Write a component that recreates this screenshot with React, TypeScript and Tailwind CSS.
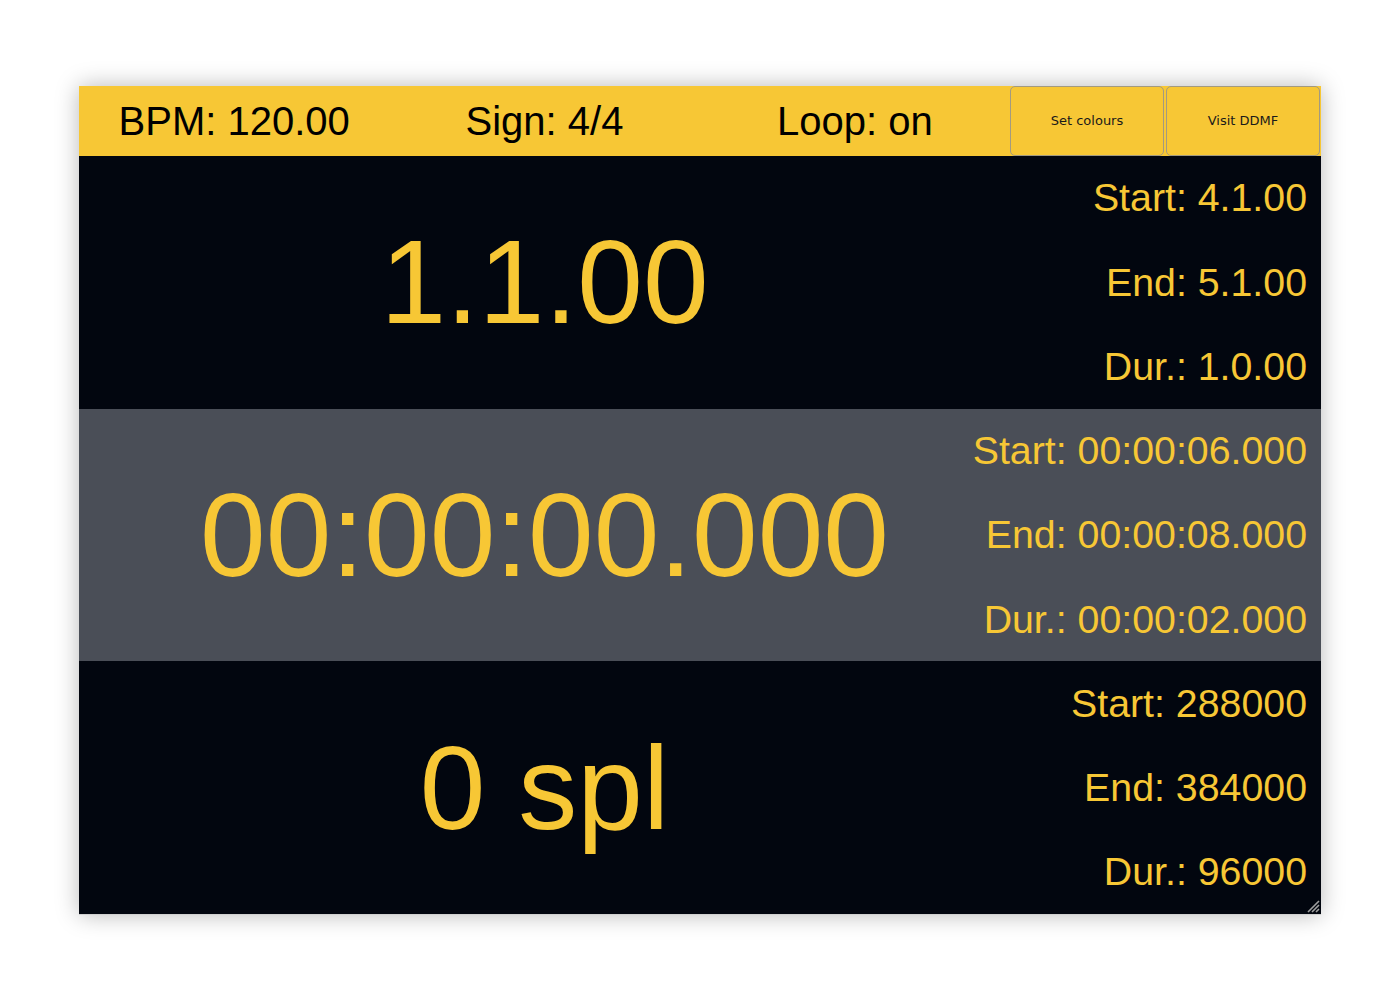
import React from "react";

const rows = [
  {
    main: "1.1.00",
    bg: "bg-[#02060f]",
    info: ["Start: 4.1.00", "End: 5.1.00", "Dur.: 1.0.00"],
  },
  {
    main: "00:00:00.000",
    bg: "bg-[#4a4e57]",
    info: ["Start: 00:00:06.000", "End: 00:00:08.000", "Dur.: 00:00:02.000"],
  },
  {
    main: "0 spl",
    bg: "bg-[#02060f]",
    info: ["Start: 288000", "End: 384000", "Dur.: 96000"],
  },
];

export default function App() {
  return (
    <div className="min-h-[1000px] w-[1400px] bg-white pt-[86px] pl-[79px]" style={{ fontFamily: '"Liberation Sans", Arial, sans-serif' }}>
      <div className="relative w-[1242px] shadow-[0_0_22px_rgba(0,0,0,0.28)] border-b border-[#d0d0d0]">
        {/* header */}
        <div className="flex h-[70px] bg-[#f7c735]">
          <div className="grid w-[931px] shrink-0 grid-cols-3 items-center text-[40px] leading-none text-black">
            <div className="text-center">BPM: 120.00</div>
            <div className="text-center">Sign: 4/4</div>
            <div className="text-center">Loop: on</div>
          </div>
          <div className="flex min-w-0 flex-1 gap-[2px] pr-px" style={{ fontFamily: '"DejaVu Sans", "Noto Sans", sans-serif' }}>
            <button className="flex-1 rounded-[5px] border border-[#a39a80] bg-[#f7c735] text-[13px] text-[#1a1a1a]">
              Set colours
            </button>
            <button className="flex-1 rounded-[5px] border border-[#a39a80] bg-[#f7c735] text-[13px] text-[#1a1a1a]">
              Visit DDMF
            </button>
          </div>
        </div>

        {rows.map((r, i) => (
          <div key={i} className={`flex h-[252.7px] ${r.bg} text-[#f7c735]`}>
            <div className="flex w-[931px] shrink-0 items-center justify-center whitespace-nowrap text-[118px] leading-none">
              {r.main}
            </div>
            <div className="flex min-w-0 flex-1 flex-col pr-[14px]">
              {r.info.map((t) => (
                <div key={t} className="flex flex-1 items-center justify-end whitespace-nowrap text-[39.3px] leading-none">
                  {t}
                </div>
              ))}
            </div>
          </div>
        ))}

        {/* resize grip */}
        <svg className="absolute bottom-[1px] right-[1px]" width="16" height="16" viewBox="0 0 16 16">
          <path d="M15 4 L4 15 M15 8 L8 15 M15 12 L12 15" stroke="#a0a0a0" strokeWidth="1.6" />
        </svg>
      </div>
    </div>
  );
}
